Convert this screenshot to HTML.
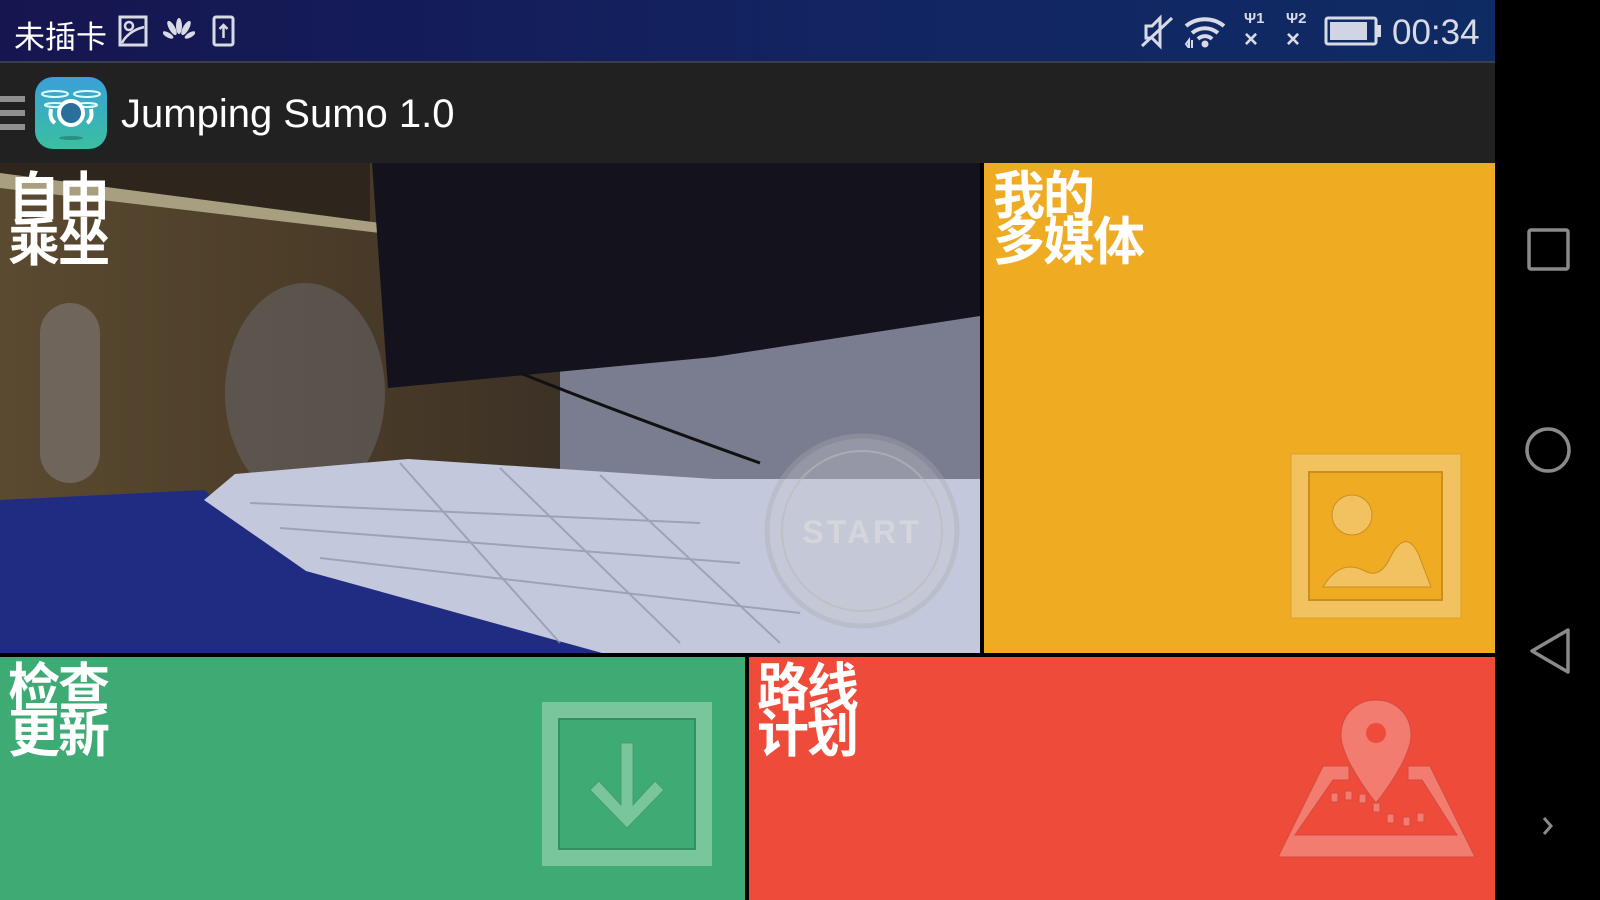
<!DOCTYPE html>
<html><head><meta charset="utf-8"><style>
*{margin:0;padding:0;box-sizing:border-box}
body{width:1600px;height:900px;background:#000;position:relative;overflow:hidden;font-family:"Liberation Sans","Noto Sans CJK SC",sans-serif}
.abs{position:absolute}
#status{left:0;top:0;width:1495px;height:63px;background:linear-gradient(90deg,#16154f,#122563 60%,#0f2b63);border-bottom:2px solid #3a3d4a}
#hdr{left:0;top:63px;width:1495px;height:100px;background:#212121}
.tile{position:absolute;overflow:hidden}
.lbl{position:absolute;color:#fff;font-family:"Noto Sans CJK SC",sans-serif;font-weight:700;font-size:52px;line-height:46px;letter-spacing:-2px}
</style></head><body>
<div id="status" class="abs">
  <div class="abs" style="left:14px;top:12px;color:#fff;font-size:31px;font-family:'Noto Sans CJK SC',sans-serif">未插卡</div>
  <svg class="abs" style="left:118px;top:15px" width="32" height="32" viewBox="0 0 32 32"><rect x="2" y="2" width="26" height="28" fill="none" stroke="#d8dae5" stroke-width="3"/><circle cx="11" cy="11" r="4" fill="none" stroke="#d8dae5" stroke-width="2.5"/><path d="M4 28 Q10 16 26 12" fill="none" stroke="#d8dae5" stroke-width="2.5"/></svg>
  <svg class="abs" style="left:163px;top:18px" width="32" height="26" viewBox="0 0 32 26"><g fill="#d8dae5"><ellipse cx="16" cy="8" rx="3" ry="8"/><ellipse cx="9" cy="10" rx="3" ry="8" transform="rotate(-30 9 10)"/><ellipse cx="23" cy="10" rx="3" ry="8" transform="rotate(30 23 10)"/><ellipse cx="5" cy="17" rx="2.5" ry="6" transform="rotate(-60 5 17)"/><ellipse cx="27" cy="17" rx="2.5" ry="6" transform="rotate(60 27 17)"/></g></svg>
  <svg class="abs" style="left:212px;top:15px" width="24" height="32" viewBox="0 0 24 32"><rect x="2" y="2" width="19" height="28" rx="2" fill="none" stroke="#d8dae5" stroke-width="3"/><path d="M11.5 23V10M7.5 14l4-4 4 4" fill="none" stroke="#d8dae5" stroke-width="2.5"/></svg>
  <svg class="abs" style="left:1140px;top:14px" width="36" height="36" viewBox="0 0 36 36"><path d="M6 12h6l8-8v28l-8-8H6z" fill="none" stroke="#d8dae5" stroke-width="3"/><path d="M2 32L32 4" stroke="#d8dae5" stroke-width="3"/></svg>
  <svg class="abs" style="left:1182px;top:14px" width="46" height="34" viewBox="0 0 46 34"><path d="M4 12a30 30 0 0 1 38 0M10 19a20 20 0 0 1 26 0M16 25a10 10 0 0 1 14 0" fill="none" stroke="#d8dae5" stroke-width="4"/><circle cx="23" cy="30" r="3.5" fill="#d8dae5"/><path d="M4 30l3-4v8zM10 26v8" stroke="#d8dae5" stroke-width="2"/></svg>
  <div class="abs" style="left:1244px;top:10px;color:#d8dae5;font-size:15px;font-weight:bold">Ψ1</div>
  <div class="abs" style="left:1244px;top:26px;color:#d8dae5;font-size:24px;font-weight:bold">×</div>
  <div class="abs" style="left:1286px;top:10px;color:#d8dae5;font-size:15px;font-weight:bold">Ψ2</div>
  <div class="abs" style="left:1286px;top:26px;color:#d8dae5;font-size:24px;font-weight:bold">×</div>
  <svg class="abs" style="left:1324px;top:16px" width="58" height="30" viewBox="0 0 58 30"><rect x="2" y="2" width="50" height="26" rx="2" fill="none" stroke="#d8dae5" stroke-width="3"/><rect x="6" y="6" width="37" height="18" fill="#d0d4e4"/><rect x="53" y="9" width="4" height="12" fill="#d8dae5"/></svg>
  <div class="abs" style="left:1392px;top:13px;color:#d8dae5;font-size:35px">00:34</div>
</div>
<div id="hdr" class="abs">
  <div class="abs" style="left:0;top:33px;width:25px;height:6px;background:#8f8f8f"></div>
  <div class="abs" style="left:0;top:47px;width:25px;height:6px;background:#8f8f8f"></div>
  <div class="abs" style="left:0;top:61px;width:25px;height:6px;background:#8f8f8f"></div>
  <div class="abs" style="left:35px;top:14px;width:72px;height:72px;border-radius:18px;background:linear-gradient(180deg,#3aa0d8,#3bbfa0)">
    <svg width="72" height="72" viewBox="0 0 72 72"><g stroke="#dff" stroke-width="2" fill="none"><ellipse cx="20" cy="17" rx="13" ry="3"/><ellipse cx="52" cy="17" rx="13" ry="3"/><ellipse cx="20" cy="28" rx="10" ry="2"/><ellipse cx="52" cy="28" rx="10" ry="2"/></g><circle cx="36" cy="36" r="12" fill="#2a6f99" stroke="#fff" stroke-width="4"/><path d="M16 32q-2 10 4 14M56 32q2 10-4 14" stroke="#fff" stroke-width="4" fill="none"/><ellipse cx="36" cy="61" rx="12" ry="2" fill="#2e8f80"/></svg>
  </div>
  <div class="abs" style="left:121px;top:29px;color:#fff;font-size:40px">Jumping Sumo 1.0</div>
</div>
<!-- video -->
<div class="tile" style="left:0;top:163px;width:980px;height:490px;background:#3e3224">
<svg width="980" height="490" viewBox="0 0 980 490">
<defs><linearGradient id="w" x1="0" y1="0" x2="1" y2="0"><stop offset="0" stop-color="#5a4a30"/><stop offset="0.35" stop-color="#4a3b28"/><stop offset="0.6" stop-color="#3a3025"/></linearGradient></defs>
<rect width="980" height="490" fill="url(#w)"/>
<polygon points="0,0 370,0 370,60 0,20" fill="#2e261c"/>
<polygon points="0,10 380,60 380,70 0,25" fill="#a89f80"/>
<polygon points="560,200 980,150 980,330 560,330" fill="#7a7d90"/>
<ellipse cx="305" cy="230" rx="80" ry="110" fill="#6a6a70" opacity="0.5"/>
<rect x="40" y="140" width="60" height="180" rx="30" fill="#807a78" opacity="0.6"/>
<polygon points="372,0 980,0 980,153 714,194 388,225" fill="#14121d"/>
<path d="M520 210 Q620 250 760 300" stroke="#111" stroke-width="3" fill="none"/>
<polygon points="0,337 204,327 306,408 612,490 0,490" fill="#1f2c82"/>
<polygon points="204,337 235,311 408,296 714,316 980,316 980,490 602,490 306,408" fill="#c4c8dc"/>
<g stroke="#8e93ab" stroke-width="2" opacity="0.7"><path d="M250 340 L700 360 M280 365 L740 400 M320 395 L800 450 M400 300 L560 480 M500 305 L680 480 M600 312 L780 480"/></g>
<circle cx="862" cy="368" r="95" fill="#c8c8d0" opacity="0.35" stroke="#aaa" stroke-width="5"/>
<circle cx="862" cy="368" r="80" fill="none" stroke="#bbb" stroke-width="2" opacity="0.6"/>
<text x="862" y="380" text-anchor="middle" font-family="Liberation Sans" font-weight="bold" font-size="32" fill="#ddd" opacity="0.7" letter-spacing="3">START</text>
</svg>
<div class="lbl" style="left:8px;top:7px">自由<br>乘坐</div>
</div>
<!-- media -->
<div class="tile" style="left:984px;top:163px;width:511px;height:490px;background:#efab22">
<div class="lbl" style="left:9px;top:6px">我的<br>多媒体</div>
<svg class="abs" style="left:306px;top:290px" width="172" height="166" viewBox="0 0 172 166"><rect x="1" y="1" width="170" height="164" fill="#f3c260" stroke="#d9a030"/><rect x="19" y="19" width="133" height="128" fill="#efab22" stroke="#c98e20" stroke-width="2"/><ellipse cx="62" cy="62" rx="20" ry="20" fill="#f3c260" stroke="#c98e20"/><path d="M33 134 Q50 105 75 118 Q90 126 100 105 Q115 75 128 100 L141 134Z" fill="#f3c260" stroke="#c98e20"/></svg>
</div>
<!-- update -->
<div class="tile" style="left:0;top:657px;width:745px;height:243px;background:#3eaa74">
<div class="lbl" style="left:8px;top:4px">检查<br>更新</div>
<svg class="abs" style="left:541px;top:44px" width="172" height="166" viewBox="0 0 172 166"><rect x="1" y="1" width="170" height="164" fill="#7ac69c"/><rect x="18" y="18" width="136" height="130" fill="#3eaa74" stroke="#358f62" stroke-width="2"/><path d="M80 42h12v62l22-24 9 9-37 38-37-38 9-9 22 24z" fill="#7ac69c" stroke="#4a9a70"/></svg>
</div>
<!-- route -->
<div class="tile" style="left:749px;top:657px;width:746px;height:243px;background:#ef4b3b">
<div class="lbl" style="left:8px;top:4px">路线<br>计划</div>
<svg class="abs" style="left:522px;top:42px" width="210" height="160" viewBox="0 0 210 160"><path d="M52 67h26v14H62l-38 55h162l-35-55h-14v-14h22l45 91H7z" fill="#f37c70" stroke="#d44a3e"/><path d="M105 1c-20 0-35 15-35 35 0 25 35 68 35 68s35-43 35-68C140 16 125 1 105 1z" fill="#f37c70" stroke="#d44a3e"/><circle cx="105" cy="34" r="10" fill="#ef4b3b"/><g fill="#f37c70" stroke="#d44a3e"><rect x="60" y="94" width="7" height="9"/><rect x="74" y="92" width="7" height="9"/><rect x="88" y="95" width="7" height="9"/><rect x="102" y="104" width="7" height="9"/><rect x="116" y="115" width="7" height="9"/><rect x="132" y="118" width="7" height="9"/><rect x="146" y="114" width="7" height="9"/></g></svg>
</div>
<!-- nav -->
<svg class="abs" style="left:1495px;top:163px" width="105" height="737" viewBox="0 0 105 737"><rect x="34" y="67" width="39" height="39" rx="2" fill="none" stroke="#8a8a8a" stroke-width="3.5"/><circle cx="53" cy="287" r="21" fill="none" stroke="#8a8a8a" stroke-width="3.5"/><path d="M73 467 L37 488 L73 509Z" fill="none" stroke="#8a8a8a" stroke-width="3.5" stroke-linejoin="round"/><path d="M49 655l7 8-7 8" fill="none" stroke="#8a8a8a" stroke-width="3"/></svg>
</body></html>
